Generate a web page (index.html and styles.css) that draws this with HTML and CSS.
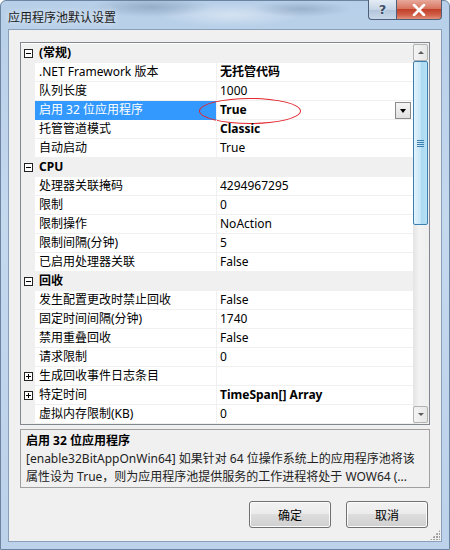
FILE: index.html
```html
<!DOCTYPE html>
<html lang="zh-CN">
<head>
    <meta charset="UTF-8">
    <title>应用程序池默认设置</title>
    <link rel="stylesheet" href="styles.css">
</head>
<body>
    <div class="window">
        <!-- Title bar -->
        <div class="titlebar">
            <span class="title">应用程序池默认设置</span>
            <div class="caption-buttons">
                <div class="cap-btn help">?</div>
                <div class="cap-btn close">
                    <svg width="14" height="12" viewBox="0 0 14 12">
                        <path d="M2 1 L12 11 M12 1 L2 11" stroke="#fff" stroke-width="2.6" stroke-linecap="round"/>
                    </svg>
                </div>
            </div>
        </div>

        <!-- Client area -->
        <div class="client">
            <div class="propgrid">
                <div class="rows">
                    <div class="row category">
                        <div class="gutter"><span class="expander minus"></span></div>
                        <div class="cat-name">(常规)</div>
                    </div>
                    <div class="row">
                        <div class="gutter"></div>
                        <div class="name">.NET Framework 版本</div>
                        <div class="value bold">无托管代码</div>
                    </div>
                    <div class="row">
                        <div class="gutter"></div>
                        <div class="name">队列长度</div>
                        <div class="value">1000</div>
                    </div>
                    <div class="row selected">
                        <div class="gutter"></div>
                        <div class="name">启用 32 位应用程序</div>
                        <div class="value bold">
                            <span>True</span>
                            <span class="drop-btn"></span>
                        </div>
                        <div class="circle"></div>
                    </div>
                    <div class="row">
                        <div class="gutter"></div>
                        <div class="name">托管管道模式</div>
                        <div class="value bold">Classic</div>
                    </div>
                    <div class="row">
                        <div class="gutter"></div>
                        <div class="name">自动启动</div>
                        <div class="value">True</div>
                    </div>
                    <div class="row category">
                        <div class="gutter"><span class="expander minus"></span></div>
                        <div class="cat-name">CPU</div>
                    </div>
                    <div class="row">
                        <div class="gutter"></div>
                        <div class="name">处理器关联掩码</div>
                        <div class="value">4294967295</div>
                    </div>
                    <div class="row">
                        <div class="gutter"></div>
                        <div class="name">限制</div>
                        <div class="value">0</div>
                    </div>
                    <div class="row">
                        <div class="gutter"></div>
                        <div class="name">限制操作</div>
                        <div class="value">NoAction</div>
                    </div>
                    <div class="row">
                        <div class="gutter"></div>
                        <div class="name">限制间隔(分钟)</div>
                        <div class="value">5</div>
                    </div>
                    <div class="row">
                        <div class="gutter"></div>
                        <div class="name">已启用处理器关联</div>
                        <div class="value">False</div>
                    </div>
                    <div class="row category">
                        <div class="gutter"><span class="expander minus"></span></div>
                        <div class="cat-name">回收</div>
                    </div>
                    <div class="row">
                        <div class="gutter"></div>
                        <div class="name">发生配置更改时禁止回收</div>
                        <div class="value">False</div>
                    </div>
                    <div class="row">
                        <div class="gutter"></div>
                        <div class="name">固定时间间隔(分钟)</div>
                        <div class="value">1740</div>
                    </div>
                    <div class="row">
                        <div class="gutter"></div>
                        <div class="name">禁用重叠回收</div>
                        <div class="value">False</div>
                    </div>
                    <div class="row">
                        <div class="gutter"></div>
                        <div class="name">请求限制</div>
                        <div class="value">0</div>
                    </div>
                    <div class="row">
                        <div class="gutter"><span class="expander plus"></span></div>
                        <div class="name">生成回收事件日志条目</div>
                        <div class="value"></div>
                    </div>
                    <div class="row">
                        <div class="gutter"><span class="expander plus"></span></div>
                        <div class="name">特定时间</div>
                        <div class="value bold">TimeSpan[] Array</div>
                    </div>
                    <div class="row">
                        <div class="gutter"></div>
                        <div class="name">虚拟内存限制(KB)</div>
                        <div class="value">0</div>
                    </div>
                </div>

                <!-- Vertical scrollbar -->
                <div class="scrollbar">
                    <div class="sb-arrow up"></div>
                    <div class="sb-thumb"><span class="grip"></span></div>
                    <div class="sb-track"></div>
                    <div class="sb-arrow down"></div>
                </div>
            </div>

            <!-- Description panel -->
            <div class="description">
                <div class="desc-title">启用 32 位应用程序</div>
                <div class="desc-line">[enable32BitAppOnWin64] 如果针对 64 位操作系统上的应用程序池将该</div>
                <div class="desc-line">属性设为 True，则为应用程序池提供服务的工作进程将处于 WOW64 (...</div>
            </div>

            <!-- Buttons -->
            <div class="buttons">
                <button class="btn">确定</button>
                <button class="btn">取消</button>
            </div>
            <div class="grip-corner"></div>
        </div>
    </div>
</body>
</html>
```

FILE: styles.css
```css
/* Base */
* {
    margin: 0;
    padding: 0;
    box-sizing: border-box;
}

body {
    width: 450px;
    height: 550px;
    overflow: hidden;
    font-family: "Noto Sans", "Noto Sans CJK SC", sans-serif;
    font-size: 12px;
    color: #000;
    background: #fff;
}

/* Window frame */
.window {
    width: 450px;
    height: 550px;
    display: flex;
    flex-direction: column;
    border: 1px solid #6d84a0;
    border-radius: 6px 6px 0 0;
    background:
        radial-gradient(ellipse 60px 10px at 150px 6px, rgba(90, 110, 140, 0.35), transparent),
        radial-gradient(ellipse 50px 8px at 300px 8px, rgba(90, 110, 140, 0.3), transparent),
        radial-gradient(ellipse 70px 12px at 230px 14px, rgba(255, 255, 255, 0.4), transparent),
        linear-gradient(#b7cfe8, #c4d8ee 40%, #bcd2ea);
}

/* Title bar */
.titlebar {
    height: 28px;
    display: flex;
    justify-content: space-between;
    align-items: flex-start;
    padding: 0 7px 0 7px;
}

.title {
    margin-top: 7px;
    font-size: 12px;
    color: #1a1a1a;
    text-shadow: 0 0 6px rgba(255, 255, 255, 0.9);
}

.caption-buttons {
    display: flex;
    margin-top: -1px;
}

.cap-btn {
    height: 20px;
    display: flex;
    align-items: center;
    justify-content: center;
    border: 1px solid #4d607a;
    border-top: none;
}

.help {
    width: 28px;
    border-radius: 0 0 0 4px;
    border-right: none;
    background: linear-gradient(#e4ecf5, #c6d5e6 50%, #b1c4da 51%, #c9d8ea);
    color: #3c4e66;
    font-weight: bold;
    font-size: 13px;
    font-family: "DejaVu Sans", sans-serif;
    text-shadow: 0 0 2px #fff;
}

.close {
    width: 46px;
    border-radius: 0 0 4px 0;
    background: linear-gradient(#e9a99c, #d7755f 45%, #c2412a 50%, #d1614b 80%, #e3937b);
}

/* Client area */
.client {
    flex: 1;
    margin: 0 7px 7px 7px;
    background: #f0f0f0;
    border: 1px solid #8aa0ba;
    display: flex;
    flex-direction: column;
    padding: 12px 11px 0 11px;
    position: relative;
}

/* Property grid */
.propgrid {
    height: 383px;
    border: 1px solid #828790;
    background: #fff;
    display: flex;
    overflow: hidden;
}

.rows {
    flex: 1;
    padding-top: 1px;
    overflow: hidden;
}

.row {
    display: grid;
    grid-template-columns: 14px 182px 1fr;
    height: 19px;
    line-height: 18px;
    position: relative;
}

.gutter {
    background: #f0f0f0;
    display: flex;
    align-items: center;
    padding-left: 3px;
}

.name {
    padding-left: 4px;
    border-right: 1px solid #f0f0f0;
    border-bottom: 1px solid #f0f0f0;
    white-space: nowrap;
    overflow: hidden;
}

.value {
    padding-left: 3px;
    border-bottom: 1px solid #f0f0f0;
    white-space: nowrap;
    display: flex;
    justify-content: space-between;
    align-items: center;
}

.bold {
    font-weight: bold;
}

.category {
    background: #f0f0f0;
}

.cat-name {
    grid-column: 2 / -1;
    padding-left: 4px;
    font-weight: bold;
}

.selected .name {
    background: #3399ff;
    color: #fff;
    border-bottom-color: #3399ff;
}

/* Expander boxes */
.expander {
    width: 9px;
    height: 9px;
    border: 1px solid #222;
    background: #fff;
    position: relative;
}

.expander::before {
    content: "";
    position: absolute;
    left: 1px;
    top: 3px;
    width: 5px;
    height: 1px;
    background: #000;
}

.expander.plus::after {
    content: "";
    position: absolute;
    left: 3px;
    top: 1px;
    width: 1px;
    height: 5px;
    background: #000;
}

/* Dropdown button in the selected value */
.drop-btn {
    width: 16px;
    height: 17px;
    margin-right: 2px;
    border: 1px solid #8a8a8a;
    background: linear-gradient(#f6f6f6, #e0e0e0);
    position: relative;
}

.drop-btn::after {
    content: "";
    position: absolute;
    left: 4px;
    top: 6px;
    border-left: 3.5px solid transparent;
    border-right: 3.5px solid transparent;
    border-top: 4px solid #000;
}

/* Red highlight ring */
.circle {
    position: absolute;
    left: 178px;
    top: -3px;
    width: 102px;
    height: 26px;
    border: 1.5px solid #e2252e;
    border-radius: 50%;
    pointer-events: none;
}

/* Scrollbar */
.scrollbar {
    width: 16px;
    display: flex;
    flex-direction: column;
    background: linear-gradient(90deg, #e4e4e4, #f3f3f3 40%, #eeeeee);
}

.sb-arrow {
    height: 17px;
    margin: 1px 1px 0 0;
    border: 1px solid #b2b2b2;
    border-radius: 2px;
    background: linear-gradient(90deg, #f4f4f4, #e6e6e6);
    position: relative;
}

.sb-arrow::after {
    content: "";
    position: absolute;
    left: 4px;
    top: 6px;
    border-left: 3px solid transparent;
    border-right: 3px solid transparent;
}

.sb-arrow.up::after {
    border-bottom: 3px solid #5c5c5c;
}

.sb-arrow.down {
    margin: 0 1px 1px 0;
}

.sb-arrow.down::after {
    border-top: 3px solid #5c5c5c;
}

.sb-thumb {
    height: 164px;
    margin-right: 1px;
    border: 1px solid #3c7fb1;
    border-radius: 2px;
    background: linear-gradient(90deg, #e3f4fc, #c4e5f6 50%, #a9d9f2 51%, #b7e0f4);
    display: flex;
    align-items: center;
    justify-content: center;
}

.grip {
    width: 7px;
    height: 7px;
    background: repeating-linear-gradient(#3c7fb1 0 1px, transparent 1px 2px);
}

.sb-track {
    flex: 1;
}

/* Description */
.description {
    height: 59px;
    margin-top: 4px;
    border: 1px solid #a0a0a0;
    padding: 2px 5px 0 5px;
    line-height: 18px;
    overflow: hidden;
}

.desc-title {
    font-weight: bold;
    margin-bottom: 0;
}

.desc-line {
    white-space: nowrap;
    overflow: hidden;
    color: #222;
}

/* Buttons */
.buttons {
    display: flex;
    justify-content: flex-end;
    gap: 15px;
    margin-top: 13px;
    padding-right: 2px;
}

.btn {
    width: 82px;
    height: 27px;
    border: 1px solid #707070;
    border-radius: 3px;
    background: linear-gradient(#f2f2f2, #ebebeb 49%, #dddddd 50%, #cfcfcf);
    box-shadow: inset 0 0 0 1px #fcfcfc;
    font-family: "Noto Sans CJK SC", sans-serif;
    font-size: 12px;
    color: #000;
}

.grip-corner {
    position: absolute;
    right: 1px;
    bottom: 1px;
    width: 10px;
    height: 10px;
    background: radial-gradient(circle at 1px 1px, #a0a0a0 1px, transparent 1.2px) 0 0 / 3px 3px;
    clip-path: polygon(100% 0, 100% 100%, 0 100%);
}
```
